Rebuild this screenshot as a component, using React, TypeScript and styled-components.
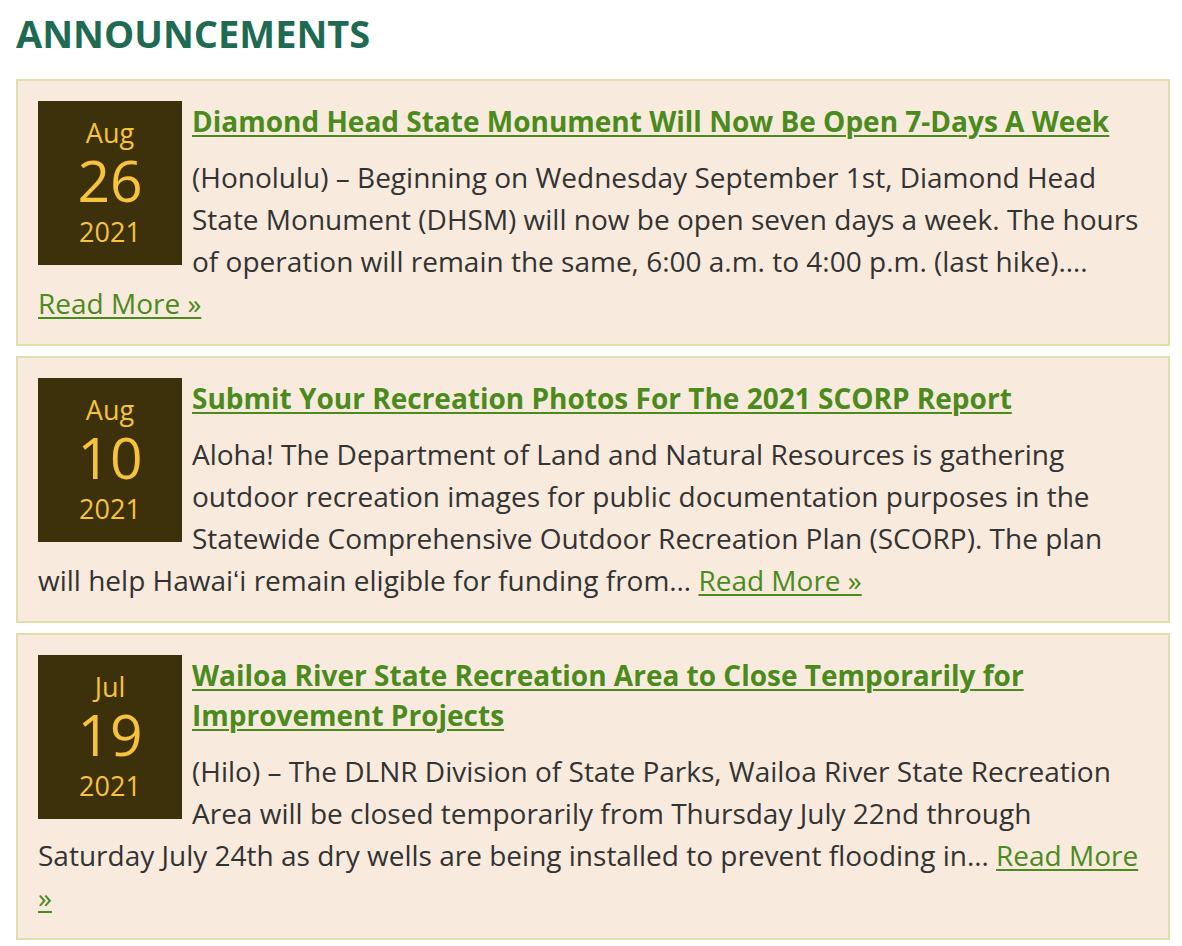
import React from "react";
import styled, { createGlobalStyle } from "styled-components";

const Global = createGlobalStyle`
  html, body { margin: 0; padding: 0; background: #ffffff; }
  body { font-family: "Open Sans", "Liberation Sans", sans-serif; }
`;

const Page = styled.div`
  padding: 0 12px 0 16px;
`;

const Heading = styled.h2`
  margin: 7px 0 20px;
  font-size: 38px;
  line-height: 52px;
  font-weight: 700;
  color: #1f6a53;
  letter-spacing: 0;
`;

const Card = styled.article`
  background: #f8eadc;
  border: 2px solid #dfe0a9;
  padding: 20px;
  margin-bottom: 10px;
  overflow: hidden;
`;

const DateBox = styled.div`
  float: left;
  width: 144px;
  height: 164px;
  margin: 0 10px 4px 0;
  background: #3d310b;
  color: #f7c23c;
  text-align: center;
  padding-top: 16px;
  box-sizing: border-box;
`;

const Month = styled.div`
  font-size: 27px;
  line-height: 32px;
`;

const Day = styled.div`
  font-size: 57px;
  line-height: 62px;
`;

const Year = styled.div`
  font-size: 27px;
  line-height: 42px;
`;

const Title = styled.h3`
  margin: 0 0 15px;
  font-size: 28px;
  line-height: 40px;
  font-weight: 700;
  a {
    color: #4b8a1c;
    text-decoration: underline;
    text-decoration-thickness: 2px;
    text-underline-offset: 3px;
  }
`;

const Body = styled.p`
  margin: 0;
  font-size: 28px;
  line-height: 42px;
  color: #333333;
`;

const More = styled.a`
  color: #4b8a1c;
  text-decoration: underline;
  text-decoration-thickness: 2px;
  text-underline-offset: 3px;
`;

type Item = { month: string; day: string; year: string; title: string; body: string };

const items: Item[] = [
  {
    month: "Aug",
    day: "26",
    year: "2021",
    title: "Diamond Head State Monument Will Now Be Open 7-Days A Week",
    body:
      "(Honolulu) – Beginning on Wednesday September 1st, Diamond Head State Monument (DHSM) will now be open seven days a week. The hours of operation will remain the same, 6:00 a.m. to 4:00 p.m. (last hike)….",
  },
  {
    month: "Aug",
    day: "10",
    year: "2021",
    title: "Submit Your Recreation Photos For The 2021 SCORP Report",
    body:
      "Aloha! The Department of Land and Natural Resources is gathering outdoor recreation images for public documentation purposes in the Statewide Comprehensive Outdoor Recreation Plan (SCORP). The plan will help Hawaiʻi remain eligible for funding from…",
  },
  {
    month: "Jul",
    day: "19",
    year: "2021",
    title: "Wailoa River State Recreation Area to Close Temporarily for Improvement Projects",
    body:
      "(Hilo) – The DLNR Division of State Parks, Wailoa River State Recreation Area will be closed temporarily from Thursday July 22nd through Saturday July 24th as dry wells are being installed to prevent flooding in…",
  },
];

export default function App() {
  return (
    <Page>
      <Global />
      <Heading>ANNOUNCEMENTS</Heading>
      {items.map((it) => (
        <Card key={it.title}>
          <DateBox>
            <Month>{it.month}</Month>
            <Day>{it.day}</Day>
            <Year>{it.year}</Year>
          </DateBox>
          <Title>
            <a href="#">{it.title}</a>
          </Title>
          <Body>
            {it.body} <More href="#">Read More »</More>
          </Body>
        </Card>
      ))}
    </Page>
  );
}
